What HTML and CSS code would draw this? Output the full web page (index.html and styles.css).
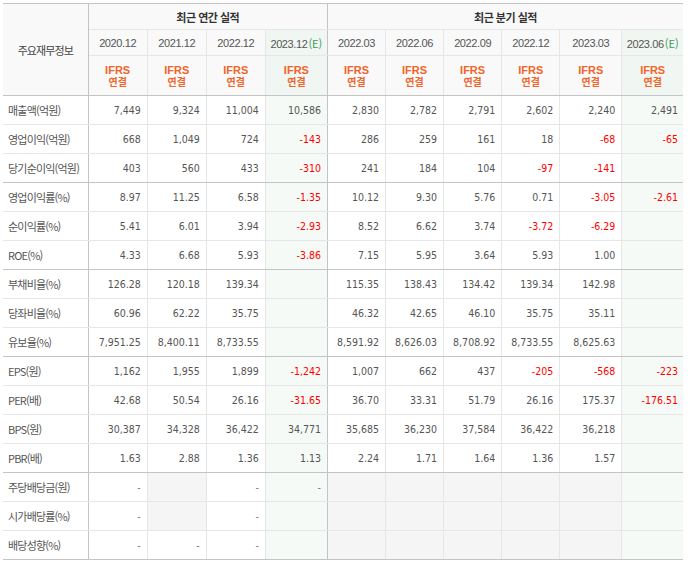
FILE: index.html
```html
<!DOCTYPE html>
<html lang="ko">
<head>
<meta charset="utf-8">
<title>주요재무정보</title>
<link rel="stylesheet" href="styles.css">
</head>
<body>
<div class="wrap">
<table class="fin">
  <colgroup>
    <col class="c-lbl"><col class="c-a"><col class="c-a"><col class="c-a"><col class="c-ae">
    <col class="c-q"><col class="c-q"><col class="c-q"><col class="c-q"><col class="c-q5"><col class="c-qe">
  </colgroup>
  <thead>
    <tr class="h1">
      <th class="corner" rowspan="3">주요재무정보</th>
      <th class="grp grp-a" colspan="4">최근 연간 실적</th>
      <th class="grp" colspan="6">최근 분기 실적</th>
    </tr>
    <tr class="h2">
      <th class="dt">2020.12</th>
      <th class="dt">2021.12</th>
      <th class="dt">2022.12</th>
      <th class="dt est sep">2023.12<span class="e">(E)</span></th>
      <th class="dt">2022.03</th>
      <th class="dt">2022.06</th>
      <th class="dt">2022.09</th>
      <th class="dt">2022.12</th>
      <th class="dt">2023.03</th>
      <th class="dt est">2023.06<span class="e">(E)</span></th>
    </tr>
    <tr class="h3">
      <th class="ifrs"><span class="en">IFRS</span><span class="ko">연결</span></th>
      <th class="ifrs"><span class="en">IFRS</span><span class="ko">연결</span></th>
      <th class="ifrs"><span class="en">IFRS</span><span class="ko">연결</span></th>
      <th class="ifrs est sep"><span class="en">IFRS</span><span class="ko">연결</span></th>
      <th class="ifrs"><span class="en">IFRS</span><span class="ko">연결</span></th>
      <th class="ifrs"><span class="en">IFRS</span><span class="ko">연결</span></th>
      <th class="ifrs"><span class="en">IFRS</span><span class="ko">연결</span></th>
      <th class="ifrs"><span class="en">IFRS</span><span class="ko">연결</span></th>
      <th class="ifrs"><span class="en">IFRS</span><span class="ko">연결</span></th>
      <th class="ifrs est"><span class="en">IFRS</span><span class="ko">연결</span></th>
    </tr>
  </thead>
  <tbody>
    <tr>
      <td class="lbl">매출액(억원)</td>
      <td>7,449</td><td>9,324</td><td>11,004</td><td>10,586</td>
      <td>2,830</td><td>2,782</td><td>2,791</td><td>2,602</td><td>2,240</td><td>2,491</td>
    </tr>
    <tr>
      <td class="lbl">영업이익(억원)</td>
      <td>668</td><td>1,049</td><td>724</td><td class="neg">-143</td>
      <td>286</td><td>259</td><td>161</td><td>18</td><td class="neg">-68</td><td class="neg">-65</td>
    </tr>
    <tr class="end">
      <td class="lbl">당기순이익(억원)</td>
      <td>403</td><td>560</td><td>433</td><td class="neg">-310</td>
      <td>241</td><td>184</td><td>104</td><td class="neg">-97</td><td class="neg">-141</td><td></td>
    </tr>
    <tr>
      <td class="lbl">영업이익률(%)</td>
      <td>8.97</td><td>11.25</td><td>6.58</td><td class="neg">-1.35</td>
      <td>10.12</td><td>9.30</td><td>5.76</td><td>0.71</td><td class="neg">-3.05</td><td class="neg">-2.61</td>
    </tr>
    <tr>
      <td class="lbl">순이익률(%)</td>
      <td>5.41</td><td>6.01</td><td>3.94</td><td class="neg">-2.93</td>
      <td>8.52</td><td>6.62</td><td>3.74</td><td class="neg">-3.72</td><td class="neg">-6.29</td><td></td>
    </tr>
    <tr class="end">
      <td class="lbl">ROE(%)</td>
      <td>4.33</td><td>6.68</td><td>5.93</td><td class="neg">-3.86</td>
      <td>7.15</td><td>5.95</td><td>3.64</td><td>5.93</td><td>1.00</td><td></td>
    </tr>
    <tr>
      <td class="lbl">부채비율(%)</td>
      <td>126.28</td><td>120.18</td><td>139.34</td><td></td>
      <td>115.35</td><td>138.43</td><td>134.42</td><td>139.34</td><td>142.98</td><td></td>
    </tr>
    <tr>
      <td class="lbl">당좌비율(%)</td>
      <td>60.96</td><td>62.22</td><td>35.75</td><td></td>
      <td>46.32</td><td>42.65</td><td>46.10</td><td>35.75</td><td>35.11</td><td></td>
    </tr>
    <tr class="end">
      <td class="lbl">유보율(%)</td>
      <td>7,951.25</td><td>8,400.11</td><td>8,733.55</td><td></td>
      <td>8,591.92</td><td>8,626.03</td><td>8,708.92</td><td>8,733.55</td><td>8,625.63</td><td></td>
    </tr>
    <tr>
      <td class="lbl">EPS(원)</td>
      <td>1,162</td><td>1,955</td><td>1,899</td><td class="neg">-1,242</td>
      <td>1,007</td><td>662</td><td>437</td><td class="neg">-205</td><td class="neg">-568</td><td class="neg">-223</td>
    </tr>
    <tr>
      <td class="lbl">PER(배)</td>
      <td>42.68</td><td>50.54</td><td>26.16</td><td class="neg">-31.65</td>
      <td>36.70</td><td>33.31</td><td>51.79</td><td>26.16</td><td>175.37</td><td class="neg">-176.51</td>
    </tr>
    <tr>
      <td class="lbl">BPS(원)</td>
      <td>30,387</td><td>34,328</td><td>36,422</td><td>34,771</td>
      <td>35,685</td><td>36,230</td><td>37,584</td><td>36,422</td><td>36,218</td><td></td>
    </tr>
    <tr class="end">
      <td class="lbl">PBR(배)</td>
      <td>1.63</td><td>2.88</td><td>1.36</td><td>1.13</td>
      <td>2.24</td><td>1.71</td><td>1.64</td><td>1.36</td><td>1.57</td><td></td>
    </tr>
    <tr>
      <td class="lbl">주당배당금(원)</td>
      <td class="dash">-</td><td class="na"></td><td class="dash">-</td><td class="dash">-</td>
      <td class="na"></td><td class="na"></td><td class="na"></td><td class="na"></td><td class="na"></td><td></td>
    </tr>
    <tr>
      <td class="lbl">시가배당률(%)</td>
      <td class="dash">-</td><td class="na"></td><td class="dash">-</td><td></td>
      <td class="na"></td><td class="na"></td><td class="na"></td><td class="na"></td><td class="na"></td><td></td>
    </tr>
    <tr class="last">
      <td class="lbl">배당성향(%)</td>
      <td class="dash">-</td><td class="dash">-</td><td class="dash">-</td><td></td>
      <td class="na"></td><td class="na"></td><td class="na"></td><td class="na"></td><td class="na"></td><td></td>
    </tr>
  </tbody>
</table>
</div>
</body>
</html>
```

FILE: styles.css
```css
html, body {
  margin: 0;
  padding: 0;
  background: #ffffff;
}

.wrap {
  padding: 3px;
}

.fin {
  border-collapse: collapse;
  table-layout: fixed;
  width: 680px;
  font-family: "DejaVu Sans Condensed", "DejaVu Sans", "Noto Sans CJK KR", sans-serif;
  font-stretch: semi-condensed;
  font-size: 10.5px;
  color: #555555;
}

.c-lbl { width: 85px; }
.c-a { width: 59px; }
.c-ae { width: 62px; }
.c-q { width: 58px; }
.c-q5 { width: 62px; }
.c-qe { width: 61px; }

.fin th,
.fin td {
  border: 1px solid #e6e6e6;
  padding: 0;
  white-space: nowrap;
  overflow: hidden;
}

/* header */
.fin th {
  background: #f9f9f9;
  font-weight: normal;
  text-align: center;
  vertical-align: middle;
}

.fin th.est {
  background: #f0f6f1;
}

.fin .h1 th {
  border-top: 1px solid #c4c4c4;
  height: 25px;
}

.fin .h2 th {
  height: 25px;
}

.fin .h3 th {
  height: 39px;
  border-bottom: 1px solid #c4c4c4;
}

.fin th.corner {
  border-left: none;
  border-right: 1px solid #c4c4c4;
  border-bottom: 1px solid #c4c4c4;
  font-family: "Noto Sans CJK KR", sans-serif;
  font-stretch: normal;
  font-size: 11px;
  letter-spacing: -0.9px;
  color: #444444;
}

.fin th.grp {
  font-family: "Noto Sans CJK KR", sans-serif;
  font-stretch: normal;
  font-weight: bold;
  font-size: 11px;
  letter-spacing: -0.5px;
  color: #333333;
}

.fin th.grp-a,
.fin th.sep {
  border-right: 1px solid #c4c4c4;
}

.fin th.dt {
  font-family: "Liberation Sans", sans-serif;
  font-stretch: normal;
  font-size: 11px;
  letter-spacing: -0.4px;
  color: #555555;
}

.fin .e {
  font-family: "Noto Sans CJK KR", sans-serif;
  color: #3d9a5c;
  letter-spacing: 0;
  margin-left: 1px;
}

.fin th.ifrs {
  font-weight: bold;
  color: #f0642a;
  font-stretch: normal;
}

.fin th.ifrs .en,
.fin th.ifrs .ko {
  display: block;
  height: 12px;
  line-height: 12px;
}

.fin th.ifrs .en {
  font-family: "Liberation Sans", sans-serif;
  font-size: 11px;
}

.fin th.ifrs .ko {
  font-family: "Noto Sans CJK KR", sans-serif;
  font-size: 10px;
}

.fin tr > :last-child {
  border-right: none;
}

/* body */
.fin td {
  height: 28px;
  text-align: right;
  padding-right: 6px;
  vertical-align: middle;
}

.fin td:nth-child(5) {
  background: #f5faf6;
  border-right: 1px solid #c4c4c4;
}

.fin td:nth-child(11) {
  background: #f5faf6;
  padding-right: 5px;
}

.fin td.lbl {
  text-align: left;
  padding: 0 0 0 5px;
  border-left: none;
  border-right: 1px solid #c4c4c4;
  font-family: "Noto Sans CJK KR", sans-serif;
  font-stretch: normal;
  font-size: 11px;
  letter-spacing: -0.8px;
  color: #555555;
}

.fin td.neg {
  color: #ff0000;
}

.fin td.dash {
  color: #777777;
}

.fin td.na {
  background: #f5f5f5;
}

.fin tr.end td {
  border-bottom: 1px solid #c4c4c4;
}

.fin tr.last td {
  border-bottom: 1px solid #c4c4c4;
}
```
